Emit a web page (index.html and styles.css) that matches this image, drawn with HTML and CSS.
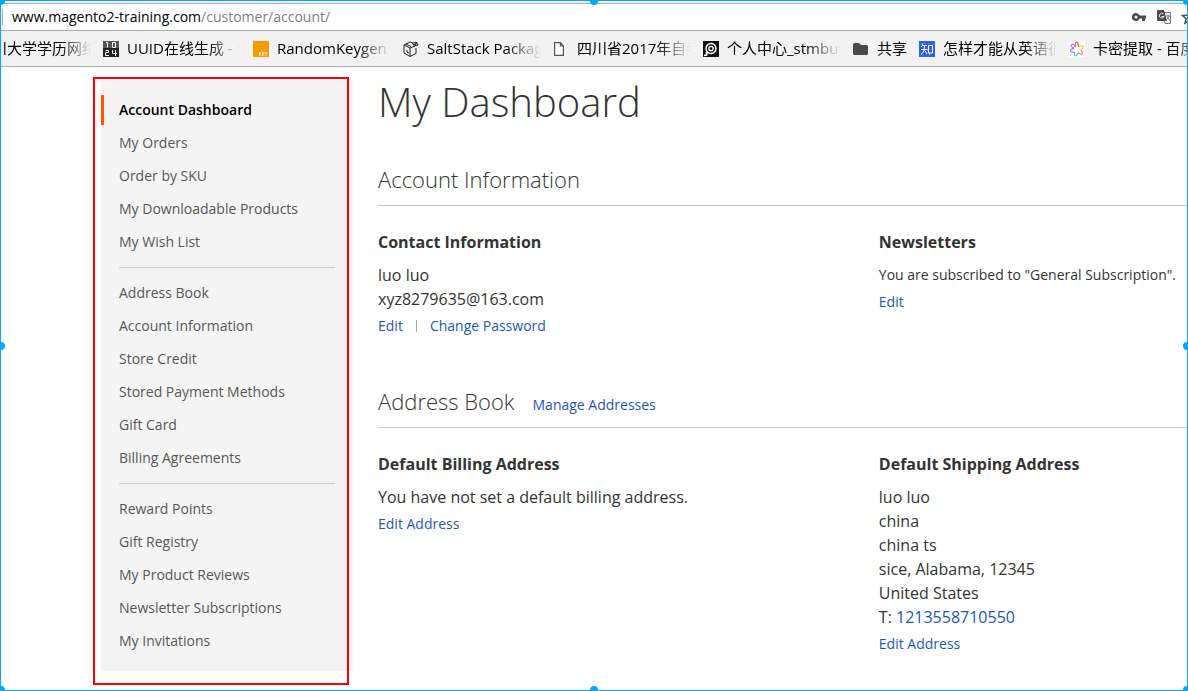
FILE: index.html
```html
<!DOCTYPE html>
<html lang="en">
<head>
<meta charset="utf-8">
<title>My Dashboard</title>
<link rel="stylesheet" href="styles.css">
</head>
<body>
<header class="browser">
  <div class="address-bar">
    <span class="url">www.magento2-training.com<span class="url-path">/customer/account/</span></span>
    <div class="bar-icons">
      <svg class="icon" viewBox="0 0 16 16"><path fill="#4a4a4a" fill-rule="evenodd" d="M5 4a4 4 0 1 0 3.600 5.500H11V12h3V9.500h1v-3H8.600A4 4 0 0 0 5 4zm0 2.500a1.500 1.500 0 1 1 0 3 1.500 1.500 0 0 1 0-3z"/></svg>
      <svg class="icon" viewBox="0 0 16 16"><path fill="#fff" stroke="#777" d="M7 3.500h7.500v11H9z"/><path fill="#4a4a4a" d="M2 1h6l3 11H2a1 1 0 0 1-1-1V2a1 1 0 0 1 1-1z"/><path fill="none" stroke="#eee" d="M7.500 5A2.400 2.400 0 1 0 8 7.500H5.500"/><path fill="none" stroke="#777" d="M9.500 7H14M12 5.500V7m1 0c-.5 2-1.500 3-2.500 3.500m.5-2.500 2.500 3.500"/></svg>
      <svg class="icon" viewBox="0 0 16 16"><path fill="none" stroke="#4a4a4a" stroke-width="1.500" d="m8 2 1.800 4.200 4.700.4-3.600 3.100 1.100 4.600L8 11.900l-4 2.400 1.100-4.600-3.600-3.100 4.700-.4z"/></svg>
    </div>
  </div>
  <nav class="bookmarks" aria-label="Bookmarks">
    <a class="bookmark bookmark-cut" href="#"><span class="label">川大学学历网络</span></a>
    <a class="bookmark" href="#">
      <svg class="icon" viewBox="0 0 16 16"><path fill="#222" d="M0 0h16v16H0z"/><path fill="#555" d="M0 0h16v7H0z"/><path fill="none" stroke="#fff" d="M3 1.500h1.500v5M9.500 1.500h3v5h-3zM2.500 9.500h3v2h-3v3h3.500M9.500 9v3.500H14M12.500 9v6"/></svg>
      <span class="label">UUID在线生成 - 1</span></a>
    <a class="bookmark" href="#">
      <svg class="icon" viewBox="0 0 16 16"><path fill="#f29c00" d="M0 0h16v16H0z"/><path fill="none" stroke="#fff" stroke-width=".8" d="M6.400 11v3.500M8.500 11l-2 1.700 2 1.800M11.500 11.400H9.700v2.700h1.800M9.700 12.800h1.500M12.300 11l1 1.700 1-1.700M13.300 12.700v1.800"/></svg>
      <span class="label">RandomKeygen -</span></a>
    <a class="bookmark" href="#">
      <svg class="icon" viewBox="0 0 16 16"><path fill="none" stroke="#222" stroke-linejoin="round" d="m1 4 6-3 3 1M1 4l6 3 5-2M1 4v8l6 3.500V7M7 15.500l6-3V7M3 3l5 2.500M4 9v2l2 1M9.500 2.500l2 2.500 3.500-1-2-3zM12 5l2-4M10 4l4-2"/></svg>
      <span class="label">SaltStack Packag</span></a>
    <a class="bookmark" href="#">
      <svg class="icon" viewBox="0 0 16 16"><path fill="#fff" stroke="#555" stroke-width="1.200" d="M1.600 1.600h5.800l3 3.400v9.400H1.600zM7.400 1.600V5h3"/></svg>
      <span class="label">四川省2017年自考</span></a>
    <a class="bookmark" href="#">
      <svg class="icon" viewBox="0 0 16 16"><path fill="#111" d="M0 0h16v16H0z"/><circle cx="8" cy="7.500" r="5" fill="none" stroke="#fff" stroke-width="1.500"/><circle cx="8" cy="7.500" r="2.200" fill="none" stroke="#fff" stroke-width="1.300"/><path fill="none" stroke="#fff" stroke-width="1.500" d="M1 14.500c2 0 3-1 3.500-2.500M3.500 11v4"/></svg>
      <span class="label">个人中心_stmbuy</span></a>
    <a class="bookmark bookmark-folder" href="#">
      <svg class="icon" viewBox="0 0 16 16"><path fill="#4a4a4a" d="M1.500 2H6l2 2h5.500A1.500 1.500 0 0 1 15 5.500v7a1.500 1.500 0 0 1-1.500 1.500h-12A1.500 1.500 0 0 1 0 12.500v-9A1.500 1.500 0 0 1 1.500 2z"/></svg>
      <span class="label">共享</span></a>
    <a class="bookmark" href="#">
      <svg class="icon" viewBox="0 0 16 16"><path fill="#2d64e8" d="M0 0h16v16H0z"/><path fill="none" stroke="#fff" d="M4 2.500 2.500 6M3.500 4.500H8M2 8.500h6.500M5.500 4.500C5.500 9 5 11.500 2 13.500M6 9.500 8 13M9.500 4.500h4v7.500h-4zM10.500 12v1.500"/></svg>
      <span class="label">怎样才能从英语很</span></a>
    <a class="bookmark" href="#">
      <svg class="icon" viewBox="0 0 16 16"><path fill="#fff" d="M0 0h16v16H0z"/><g fill="none" stroke-width="1.200"><path stroke="#f05a5a" d="M6 6 6.500 2Q8 0 9 2.500L10 6"/><path stroke="#f5d21e" d="m10 5.500 3-1q2.500.5 1 2L12 9"/><path stroke="#ef8f6a" d="m12 8.500 1.500 3q0 2.500-2 1.500L9 11.500"/><path stroke="#45c7dc" d="M10 11.500 7.500 14.500q-2 1-2-1.500v-2"/><path stroke="#7a8df0" d="m6 11.500-3.500-.5q-2-1-.5-2.500L5 7"/><path stroke="#c567e0" d="M5 8 2 5q0-2 2-1.500L7 5"/></g></svg>
      <span class="label">卡密提取 - 百度</span></a>
  </nav>
</header>

<div class="page">
  <aside class="sidebar">
    <nav class="account-nav" aria-label="Account">
      <ul class="nav-list">
        <li><a class="nav-link current" href="#">Account Dashboard</a></li>
        <li><a class="nav-link" href="#">My Orders</a></li>
        <li><a class="nav-link" href="#">Order by SKU</a></li>
        <li><a class="nav-link" href="#">My Downloadable Products</a></li>
        <li><a class="nav-link" href="#">My Wish List</a></li>
        <li class="delimiter"></li>
        <li><a class="nav-link" href="#">Address Book</a></li>
        <li><a class="nav-link" href="#">Account Information</a></li>
        <li><a class="nav-link" href="#">Store Credit</a></li>
        <li><a class="nav-link" href="#">Stored Payment Methods</a></li>
        <li><a class="nav-link" href="#">Gift Card</a></li>
        <li><a class="nav-link" href="#">Billing Agreements</a></li>
        <li class="delimiter"></li>
        <li><a class="nav-link" href="#">Reward Points</a></li>
        <li><a class="nav-link" href="#">Gift Registry</a></li>
        <li><a class="nav-link" href="#">My Product Reviews</a></li>
        <li><a class="nav-link" href="#">Newsletter Subscriptions</a></li>
        <li><a class="nav-link" href="#">My Invitations</a></li>
      </ul>
    </nav>
    <div class="highlight"></div>
  </aside>

  <main class="main">
    <h1 class="page-title">My Dashboard</h1>

    <section class="block">
      <div class="block-head"><h2 class="block-title">Account Information</h2></div>
      <div class="block-content">
        <div class="box">
          <h3 class="box-title">Contact Information</h3>
          <p class="box-text">luo luo<br>xyz8279635@163.com</p>
          <div class="actions"><a href="#">Edit</a><span class="separator"></span><a href="#">Change Password</a></div>
        </div>
        <div class="box">
          <h3 class="box-title">Newsletters</h3>
          <p class="box-text small">You are subscribed to "General Subscription".</p>
          <div class="actions"><a href="#">Edit</a></div>
        </div>
      </div>
    </section>

    <section class="block">
      <div class="block-head"><h2 class="block-title">Address Book</h2><a href="#">Manage Addresses</a></div>
      <div class="block-content">
        <div class="box">
          <h3 class="box-title">Default Billing Address</h3>
          <p class="box-text">You have not set a default billing address.</p>
          <div class="actions"><a href="#">Edit Address</a></div>
        </div>
        <div class="box">
          <h3 class="box-title">Default Shipping Address</h3>
          <address class="box-text">luo luo<br>china<br>china ts<br>sice, Alabama, 12345<br>United States<br>T: <a href="#">1213558710550</a></address>
          <div class="actions"><a href="#">Edit Address</a></div>
        </div>
      </div>
    </section>
  </main>
</div>

<div class="frame">
  <span class="dot top-left"></span><span class="dot top"></span><span class="dot top-right"></span>
  <span class="dot left"></span><span class="dot right"></span>
  <span class="dot bottom-left"></span><span class="dot bottom"></span><span class="dot bottom-right"></span>
</div>
</body>
</html>
```

FILE: styles.css
```css
* { box-sizing: border-box; }

body {
  margin: 0;
  background: #fff;
  color: #333;
  font-family: "Open Sans", "Noto Sans CJK SC", sans-serif;
  font-size: 14px;
}

h1, h2, h3, p, ul, address { margin: 0; padding: 0; font-style: normal; }
a { color: #1d57b5; text-decoration: none; }

/* Browser chrome */
.browser {
  padding-top: 3px;
  background: #f2f2f2;
  border-bottom: 1px solid #b0b0b0;
  overflow: hidden;
}
.address-bar {
  display: flex;
  align-items: center;
  justify-content: space-between;
  height: 28px;
  padding-left: 2px;
  background: #fff;
  border-top: 1px solid #aaa;
  border-bottom: 1px solid #aaa;
}
.url {
  padding-left: 9px;
  border-left: 1px solid #aaa;
  color: #000;
  font-size: 14px;
  line-height: 16px;
}
.url-path { color: #808080; }
.bar-icons { display: flex; gap: 9px; margin-right: -9px; }
.icon { flex: none; width: 16px; height: 16px; }

.bookmarks {
  display: flex;
  gap: 12px;
  height: 35px;
  align-items: center;
}
.bookmark {
  display: flex;
  flex: none;
  gap: 8px;
  align-items: center;
  width: 138px;
  color: #000;
  font-size: 15px;
  line-height: 22px;
  white-space: nowrap;
}
.bookmark .label {
  flex: 1;
  min-width: 0;
  padding-bottom: 2px;
  overflow: hidden;
  -webkit-mask-image: linear-gradient(to right, #000 70%, transparent);
  mask-image: linear-gradient(to right, #000 70%, transparent);
}
.bookmark-cut { width: 99px; margin-left: -8px; }
.bookmark-folder { width: 54px; }
.bookmark-folder .label { -webkit-mask-image: none; mask-image: none; }

/* Page */
.page {
  display: flex;
  align-items: flex-start;
  gap: 25px;
  padding: 13px 0 20px 101px;
}

.sidebar {
  position: relative;
  flex: none;
  width: 252px;
}
.account-nav { padding: 15px 0; background: #f4f4f4; }
.nav-list {
  display: flex;
  flex-direction: column;
  gap: 3px;
  list-style: none;
}
.nav-link {
  display: block;
  padding: 5px 18px 5px 15px;
  border-left: 3px solid transparent;
  color: #575757;
  line-height: 20px;
}
.nav-link.current {
  border-left-color: #ff5501;
  color: #000;
  font-weight: 600;
}
.delimiter {
  height: 1px;
  margin: 7px 18px;
  background: #c6c6c6;
}
.highlight {
  position: absolute;
  inset: -3px 4px -14px -8px;
  border: 2px solid #f00;
  pointer-events: none;
}

.main { flex: 1; min-width: 0; }
.page-title {
  font-size: 40px;
  font-weight: 300;
  line-height: 44px;
  margin-bottom: 39px;
}
.block + .block { margin-top: 49px; }
.block-head {
  display: flex;
  align-items: baseline;
  gap: 18px;
  padding-bottom: 10px;
  border-bottom: 1px solid #c6c6c6;
}
.block-title {
  font-size: 22px;
  font-weight: 300;
  line-height: 32px;
}
.block-content {
  display: grid;
  grid-template-columns: minmax(0, 1.62fr) minmax(0, 1fr);
  padding-top: 24px;
}
.box-title {
  margin-bottom: 9px;
  font-size: 16px;
  font-weight: 700;
  line-height: 24px;
}
.box-text { font-size: 16px; line-height: 24px; }
.box-text.small { font-size: 14px; white-space: nowrap; }
.actions {
  display: flex;
  align-items: center;
  margin-top: 5px;
  line-height: 20px;
}
.separator {
  width: 1px;
  height: 12px;
  margin: 0 13px;
  background: #a6a6a6;
}

/* Selection frame over the whole window */
.frame {
  position: fixed;
  inset: 0;
  border: 1px solid #00a8ff;
  overflow: hidden;
  pointer-events: none;
}
.dot {
  position: absolute;
  width: 8px;
  height: 8px;
  border-radius: 50%;
  background: #00a8ff;
  transform: translate(-50%, -50%);
}
.top-left { left: 0; top: 0; }
.top { left: 50%; top: 0; }
.top-right { left: 100%; top: 0; }
.left { left: 0; top: 50%; }
.right { left: 100%; top: 50%; }
.bottom-left { left: 0; top: 100%; }
.bottom { left: 50%; top: 100%; }
.bottom-right { left: 100%; top: 100%; }
```
